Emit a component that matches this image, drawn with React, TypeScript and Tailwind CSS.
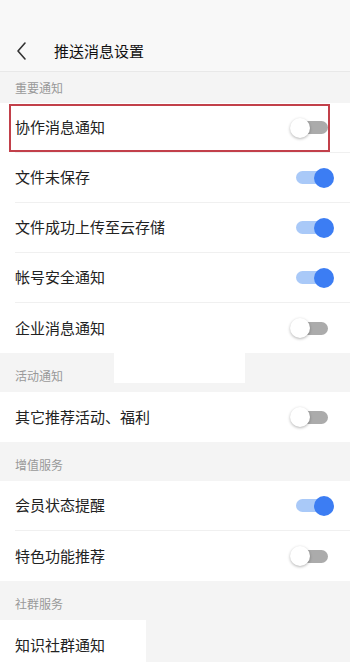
import { useState } from 'react'

type Item = { label: string; on: boolean; marked?: boolean }
type Group = { title: string; items: Item[] }

const GROUPS: Group[] = [
  {
    title: '重要通知',
    items: [
      { label: '协作消息通知', on: false, marked: true },
      { label: '文件未保存', on: true },
      { label: '文件成功上传至云存储', on: true },
      { label: '帐号安全通知', on: true },
      { label: '企业消息通知', on: false },
    ],
  },
  { title: '活动通知', items: [{ label: '其它推荐活动、福利', on: false }] },
  {
    title: '增值服务',
    items: [
      { label: '会员状态提醒', on: true },
      { label: '特色功能推荐', on: false },
    ],
  },
]

const Toggle = ({ on, onClick }: { on: boolean; onClick: () => void }) => (
  <button onClick={onClick} className="relative flex h-5 w-[44px] shrink-0 items-center px-[6px]">
    <span className={`h-[13px] w-full rounded-full ${on ? 'bg-[#a9c9f8]' : 'bg-[#ababab]'}`} />
    <span
      className={`absolute top-0 h-5 w-5 rounded-full ${
        on ? 'right-0 bg-[#3c7df3]' : 'left-0 bg-white shadow-[0_1px_3px_rgba(0,0,0,0.3)]'
      }`}
    />
  </button>
)

const Row = ({ item, last }: { item: Item; last: boolean }) => {
  const [on, setOn] = useState(item.on)
  return (
    <div className="relative bg-white pl-[15px]">
      <div
        className={`flex h-[50px] items-center justify-between pr-[16px] ${
          last ? '' : 'border-b border-[#f0f0f0]'
        }`}
      >
        <span className="text-[15px] text-[#222]">{item.label}</span>
        <Toggle on={on} onClick={() => setOn(!on)} />
      </div>
      {item.marked && (
        <div className="pointer-events-none absolute left-[9px] top-px h-[48px] w-[321px] border-2 border-[#c2404a]" />
      )}
    </div>
  )
}

export default function App() {
  return (
    <div
      className="relative h-[662px] w-[350px] overflow-hidden bg-[#f4f4f4]"
      style={{ fontFamily: '"Noto Sans CJK SC", "Noto Sans", sans-serif' }}
    >
      <div className="flex h-[72px] items-end border-b border-[#e8e8e8] bg-[#f8f8f8] pb-[10px]">
        <svg className="ml-[15px] h-[20px] w-[14px]" viewBox="0 0 14 20" fill="none">
          <path d="M10 2 L3 10 L10 18" stroke="#333" strokeWidth="1.6" strokeLinecap="round" strokeLinejoin="round" />
        </svg>
        <h1 className="ml-[25px] text-[15px] leading-5 text-[#111]">推送消息设置</h1>
      </div>

      {GROUPS.map((g, gi) => (
        <div key={g.title}>
          <div
            className={`flex pl-[15px] text-[12px] text-[#999] ${
              gi === 0 ? 'h-[31px] items-center' : 'h-[39px] items-end pb-[7px]'
            }`}
          >
            {g.title}
          </div>
          {g.items.map((item, i) => (
            <Row key={item.label} item={item} last={i === g.items.length - 1} />
          ))}
        </div>
      ))}

      <div className="flex h-[39px] items-end pb-[7px] pl-[15px] text-[12px] text-[#999]">社群服务</div>
      <div className="flex h-[50px] w-[146px] items-center bg-white pl-[15px] text-[15px] text-[#222]">
        知识社群通知
      </div>

      {/* blank patch present in the screenshot */}
      <div className="absolute left-[114px] top-[303px] h-[80px] w-[131px] bg-white" />
    </div>
  )
}
